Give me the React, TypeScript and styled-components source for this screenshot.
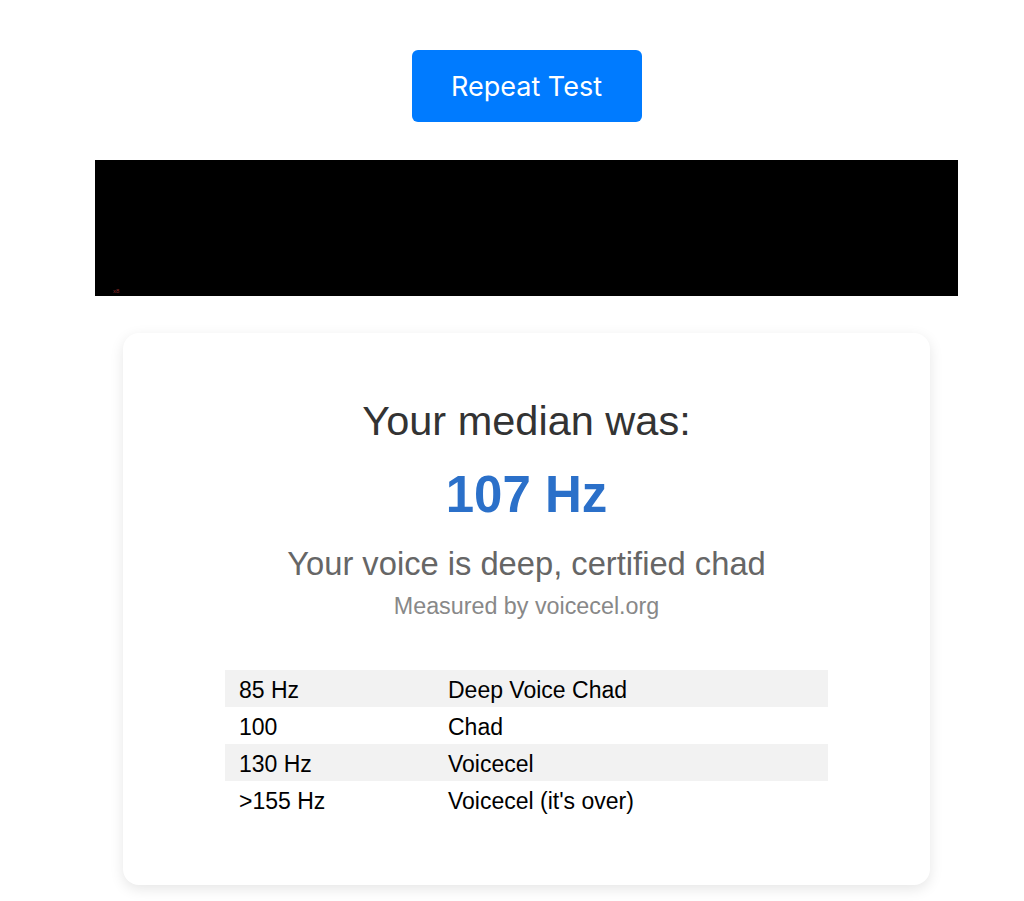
import React from "react";
import styled, { createGlobalStyle } from "styled-components";

const Global = createGlobalStyle`
  html, body { margin: 0; padding: 0; background: #ffffff; }
  body { font-family: "Liberation Sans", Arial, sans-serif; }
`;

const Page = styled.div`
  width: 1024px;
  box-sizing: border-box;
  padding: 50px 0 17px 29px;
  display: flex;
  flex-direction: column;
  align-items: center;
`;

const Button = styled.button`
  width: 230px;
  height: 72px;
  border: none;
  border-radius: 6px;
  background: #007bff;
  color: #ffffff;
  font-family: Inter, "Noto Sans", sans-serif;
  font-size: 27px;
  padding: 0;
  cursor: pointer;
`;

const Canvas = styled.div`
  position: relative;
  margin-top: 38px;
  width: 863px;
  height: 136px;
  background: #000000;
`;

const CanvasLabel = styled.span`
  position: absolute;
  left: 18px;
  bottom: 2px;
  font-size: 6px;
  line-height: 6px;
  color: #8a2a2a;
  font-family: "Liberation Sans", Arial, sans-serif;
`;

const Card = styled.div`
  margin-top: 37px;
  width: 807px;
  box-sizing: border-box;
  padding: 64px 0 67px;
  background: #ffffff;
  border-radius: 16px;
  box-shadow: 0 4px 14px rgba(0, 0, 0, 0.1);
  display: flex;
  flex-direction: column;
  align-items: center;
`;

const Title = styled.h2`
  margin: 0;
  font-size: 41.5px;
  line-height: 48px;
  font-weight: 400;
  color: #333333;
`;

const Value = styled.div`
  margin-top: 21px;
  font-size: 51px;
  line-height: 58px;
  font-weight: 700;
  color: #2b70c9;
`;

const Verdict = styled.div`
  margin-top: 21px;
  font-size: 32.7px;
  line-height: 38px;
  color: #666666;
`;

const Credit = styled.div`
  margin-top: 10px;
  font-size: 23.3px;
  line-height: 27px;
  color: #888888;
`;

const Table = styled.div`
  margin-top: 50px;
  width: 603px;
  display: flex;
  flex-direction: column;
`;

const Row = styled.div<{ $shaded: boolean }>`
  display: grid;
  grid-template-columns: 209px 1fr;
  height: 37px;
  align-items: center;
  background: ${(p) => (p.$shaded ? "#f2f2f2" : "transparent")};
`;

const Cell = styled.div`
  padding: 4px 14px 0;
  font-size: 23px;
  line-height: 27px;
  color: #000000;
`;

const rows: [string, string][] = [
  ["85 Hz", "Deep Voice Chad"],
  ["100", "Chad"],
  ["130 Hz", "Voicecel"],
  [">155 Hz", "Voicecel (it's over)"],
];

export default function App() {
  return (
    <>
      <Global />
      <Page>
        <Button>Repeat Test</Button>
        <Canvas>
          <CanvasLabel>x8</CanvasLabel>
        </Canvas>
        <Card>
          <Title>Your median was:</Title>
          <Value>107 Hz</Value>
          <Verdict>Your voice is deep, certified chad</Verdict>
          <Credit>Measured by voicecel.org</Credit>
          <Table>
            {rows.map(([a, b], i) => (
              <Row key={i} $shaded={i % 2 === 0}>
                <Cell>{a}</Cell>
                <Cell>{b}</Cell>
              </Row>
            ))}
          </Table>
        </Card>
      </Page>
    </>
  );
}
